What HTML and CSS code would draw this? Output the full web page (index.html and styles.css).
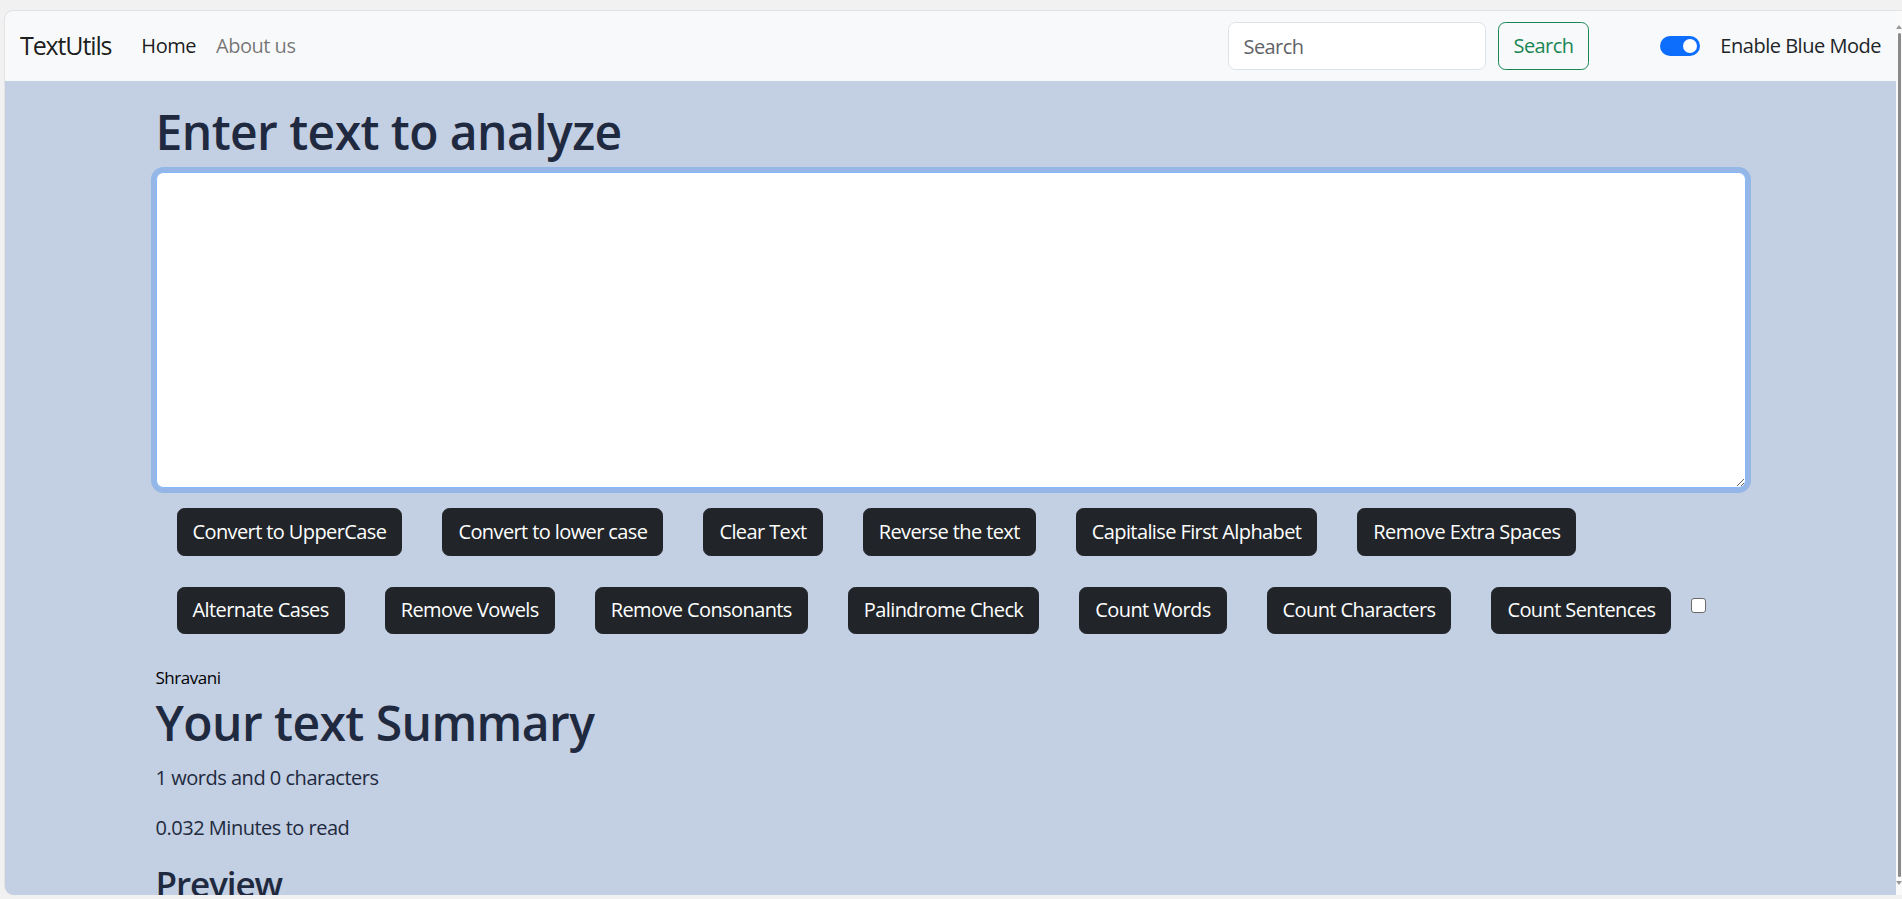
FILE: index.html
```
<!DOCTYPE html>
<html lang="en">
<head>
<meta charset="utf-8">
<title>TextUtils</title>
<link rel="stylesheet" href="styles.css">
</head>
<body>
<div class="window">
  <div class="viewport">
    <nav class="navbar">
      <a class="brand" href="#">TextUtils</a>
      <ul class="nav-links">
        <li><a class="nav-link active" href="#">Home</a></li>
        <li><a class="nav-link" href="#">About us</a></li>
      </ul>
      <form class="search-form">
        <input class="search-input" type="search" placeholder="Search">
        <button class="btn-search" type="button">Search</button>
      </form>
      <div class="switch">
        <span class="toggle"><span class="knob"></span></span>
        <label class="switch-label">Enable Blue Mode</label>
      </div>
    </nav>
    <main class="container">
      <h1 class="heading">Enter text to analyze</h1>
      <textarea class="textbox"></textarea>
      <div class="actions">
        <div class="btn-row">
          <button class="btn">Convert to UpperCase</button>
          <button class="btn">Convert to lower case</button>
          <button class="btn">Clear Text</button>
          <button class="btn">Reverse the text</button>
          <button class="btn">Capitalise First Alphabet</button>
          <button class="btn">Remove Extra Spaces</button>
        </div>
        <div class="btn-row">
          <button class="btn">Alternate Cases</button>
          <button class="btn">Remove Vowels</button>
          <button class="btn">Remove Consonants</button>
          <button class="btn">Palindrome Check</button>
          <button class="btn">Count Words</button>
          <button class="btn">Count Characters</button>
          <button class="btn">Count Sentences</button>
          <input class="check" type="checkbox">
        </div>
      </div>
      <div class="owner">Shravani</div>
      <h1 class="heading summary">Your text Summary</h1>
      <p class="stat">1 words and 0 characters</p>
      <p class="stat">0.032 Minutes to read</p>
      <h3 class="subheading">Preview</h3>
    </main>
  </div>
  <div class="scrollbar">
    <span class="arrow up"></span>
    <span class="thumb"></span>
    <span class="arrow down"></span>
  </div>
</div>
</body>
</html>
```
FILE: styles.css
```
html, body {
  margin: 0;
  height: 100%;
  overflow: hidden;
}
body {
  background: #f1f1f1;
  font-family: "Open Sans", "Noto Sans", sans-serif;
  letter-spacing: -0.03em;
  color: #212a3e;
}
.window {
  margin: 10px 0 0 4px;
  height: 885px;
  display: flex;
  border-top: 1px solid #e3e3e3;
  border-left: 1px solid #e3e3e3;
  border-radius: 9px 0 0 9px;
  overflow: hidden;
  box-sizing: border-box;
}
.viewport {
  flex: 1;
  background: #c3cfe2;
  overflow: hidden;
}
.scrollbar {
  width: 6px;
  background: #fafafa;
  display: flex;
  flex-direction: column;
  align-items: center;
  padding: 14px 0 10px;
  box-sizing: border-box;
}
.thumb {
  flex: 1;
  width: 3px;
  margin: 4px 0;
  border-radius: 2px;
  background: #8a8a8a;
}
.arrow {
  width: 0;
  height: 0;
  border-left: 3px solid transparent;
  border-right: 3px solid transparent;
}
.arrow.up { border-bottom: 4px solid #9a9a9a; }
.arrow.down { border-top: 4px solid #9a9a9a; }

/* navbar */
.navbar {
  display: flex;
  align-items: center;
  background: #f8f9fa;
  padding: 10px 15px;
}
.brand {
  font-size: 25px;
  line-height: 37.5px;
  letter-spacing: -0.045em;
  padding: 6.25px 0;
  margin-right: 20px;
  color: rgba(0, 0, 0, .9);
  text-decoration: none;
}
.nav-links {
  display: flex;
  list-style: none;
  margin: 0;
  padding: 0;
}
.nav-link {
  display: block;
  padding: 10px;
  font-size: 20px;
  line-height: 30px;
  color: rgba(0, 0, 0, .55);
  text-decoration: none;
}
.nav-link.active { color: rgba(0, 0, 0, .9); }
.search-form {
  margin-left: auto;
  display: flex;
  align-items: center;
}
.search-input {
  width: 258px;
  height: 47.5px;
  box-sizing: border-box;
  padding: 7.5px 15px;
  border: 1.25px solid #dee2e6;
  border-radius: 7.5px;
  font: 20px/30px "Open Sans", "Noto Sans", sans-serif;
  letter-spacing: -0.03em;
  color: #212529;
  background: #fff;
}
.search-input::placeholder { color: #5f6368; }
.btn-search {
  margin-left: 12px;
  height: 47.5px;
  padding: 7.5px 15px;
  border: 1.25px solid #198754;
  border-radius: 7.5px;
  background: transparent;
  color: #198754;
  font: 20px/30px "Open Sans", "Noto Sans", sans-serif;
  letter-spacing: -0.03em;
}
.switch {
  display: flex;
  align-items: center;
  margin-left: 71px;
}
.toggle {
  width: 40px;
  height: 20px;
  box-sizing: border-box;
  border-radius: 10px;
  background: #0d6efd;
  display: flex;
  align-items: center;
  justify-content: flex-end;
  padding-right: 3px;
}
.knob {
  width: 14px;
  height: 14px;
  border-radius: 50%;
  background: #fff;
}
.switch-label {
  margin-left: 20px;
  font-size: 20px;
  line-height: 30px;
  color: #212529;
}

/* main */
.container {
  width: 1590px;
  margin: 0 auto;
  padding-top: 21px;
}
.heading {
  font-size: 48px;
  font-weight: 600;
  line-height: 60px;
  letter-spacing: -0.012em;
  margin: 0 0 10px;
  color: #1f2a40;
}
.textbox {
  display: block;
  width: 100%;
  height: 316px;
  box-sizing: border-box;
  border: 1.25px solid #86b7fe;
  border-radius: 7.5px;
  box-shadow: 0 0 0 5px rgba(13, 110, 253, .25);
  background: #fff;
  outline: none;
  resize: vertical;
  margin: 0 0 20px;
  padding: 7.5px 15px;
  font: 20px/30px "Open Sans", sans-serif;
}
.actions {
  display: flex;
  flex-direction: column;
  gap: 31px;
}
.btn-row {
  display: flex;
  align-items: flex-start;
  margin-left: 1px;
}
.btn {
  flex-shrink: 0;
  margin: 0 20px;
  height: 47.5px;
  padding: 7.5px 15px;
  border: 1.25px solid #212529;
  border-radius: 7.5px;
  background: #212529;
  color: #fff;
  font: 20px/30px "Open Sans", "Noto Sans", sans-serif;
  letter-spacing: -0.03em;
  white-space: nowrap;
}
.check {
  flex-shrink: 0;
  appearance: none;
  margin: 11px 0 0;
  width: 15px;
  height: 15px;
  border: 1px solid #6b6b6b;
  border-radius: 3px;
  background: #fff;
}
.owner {
  margin-top: 30px;
  font-size: 17px;
  line-height: 27px;
  color: #000;
}
.summary { margin-top: 2px; }
.stat {
  margin: 0 0 20px;
  font-size: 20px;
  line-height: 30px;
}
.subheading {
  margin: 0;
  font-size: 35px;
  font-weight: 600;
  line-height: 42px;
  letter-spacing: -0.03em;
  color: #1f2a40;
}
```
